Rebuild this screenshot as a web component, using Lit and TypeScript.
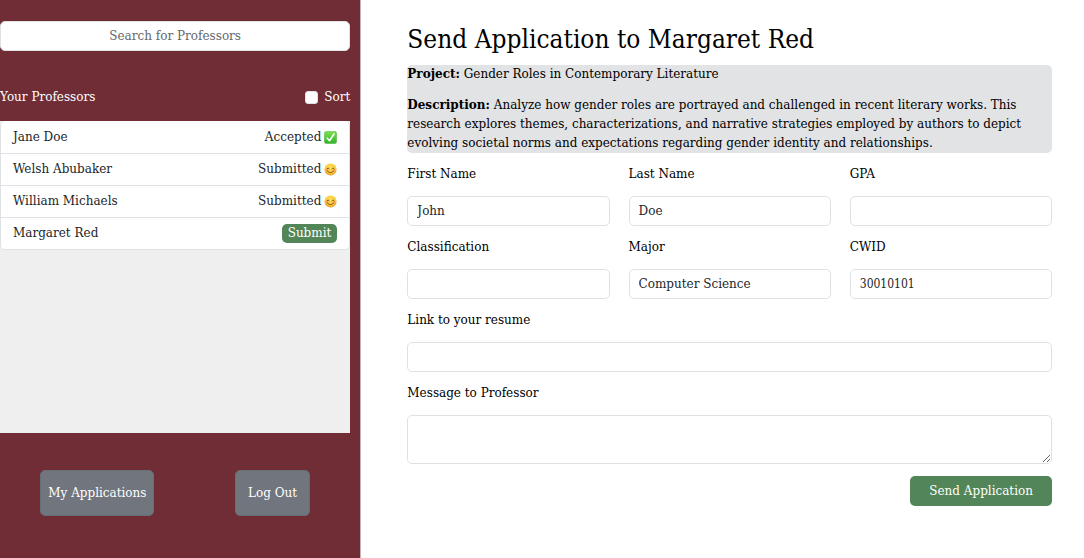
import { LitElement, html, css } from "lit";
import { customElement, property, state } from "lit/decorators.js";

type Status = "accepted" | "submitted" | "open";

interface Professor {
  name: string;
  status: Status;
}

const professors: Professor[] = [
  { name: "Jane Doe", status: "accepted" },
  { name: "Welsh Abubaker", status: "submitted" },
  { name: "William Michaels", status: "submitted" },
  { name: "Margaret Red", status: "open" },
];

const checkIcon = html`<svg viewBox="0 0 28 28" aria-hidden="true">
  <defs>
    <linearGradient id="green" x1="0" y1="0" x2="0" y2="1">
      <stop offset="0" stop-color="#7be04a" />
      <stop offset="1" stop-color="#2fb52b" />
    </linearGradient>
  </defs>
  <rect x="1" y="1" width="26" height="26" rx="4" fill="url(#green)" stroke="#3fa535" />
  <path d="M7 15.5 L12 21 L21.5 6.5" fill="none" stroke="#fff" stroke-width="3.4" stroke-linecap="round" stroke-linejoin="round" />
</svg>`;

const smileIcon = html`<svg viewBox="0 0 28 28" aria-hidden="true">
  <defs>
    <radialGradient id="gold" cx="0.5" cy="0.4" r="0.6">
      <stop offset="0" stop-color="#ffe566" />
      <stop offset="0.7" stop-color="#fbc93a" />
      <stop offset="1" stop-color="#dd9222" />
    </radialGradient>
  </defs>
  <circle cx="14" cy="14" r="13" fill="url(#gold)" />
  <circle cx="6.5" cy="16" r="3" fill="#f3893a" opacity="0.6" />
  <circle cx="21.5" cy="16" r="3" fill="#f3893a" opacity="0.6" />
  <path d="M6 12.5 Q8.8 8 11.5 12.5 M16.5 12.5 Q19.2 8 22 12.5 M7.5 17.5 Q14 24 20.5 17.5" fill="none" stroke="#6d3c12" stroke-width="1.8" stroke-linecap="round" />
</svg>`;

@customElement("professor-sidebar")
export class ProfessorSidebar extends LitElement {
  static styles = css`
    :host {
      display: flex;
      flex-direction: column;
      box-sizing: border-box;
      padding: 21px 10px 42px 0;
      background: #702d36;
      border-right: 1px solid #c9b0b3;
      color: #fff;
    }
    .search {
      box-sizing: border-box;
      width: 100%;
      height: 30px;
      padding: 0 10px;
      border: 1px solid #dee2e6;
      border-radius: 5px;
      background: #fff;
      color: #212529;
      font: inherit;
      text-align: center;
    }
    .search::placeholder {
      color: #63676b;
      opacity: 1;
    }
    .bar {
      display: flex;
      justify-content: space-between;
      align-items: center;
      margin: 37px 0 14px;
    }
    .title {
      margin: 0;
      font: inherit;
    }
    .sort {
      display: flex;
      align-items: center;
      gap: 6px;
    }
    .tick {
      appearance: none;
      width: 13px;
      height: 13px;
      margin: 0;
      border: 1px solid #dee2e6;
      border-radius: 3px;
      background: #fff;
    }
    .tick:checked {
      background: #0d6efd;
      border-color: #0d6efd;
    }
    .panel {
      flex: 1;
      background: #efefef;
    }
    .list {
      margin: 0;
      padding: 0;
      list-style: none;
      background: #fff;
      border: 1px solid #dee2e6;
      border-top: 0;
      border-radius: 5px;
      color: #212529;
    }
    .item {
      display: flex;
      justify-content: space-between;
      align-items: center;
      box-sizing: border-box;
      height: 32px;
      padding: 0 12px;
    }
    .item + .item {
      border-top: 1px solid #dee2e6;
    }
    .status {
      display: flex;
      align-items: center;
      gap: 3px;
    }
    .status svg {
      width: 13px;
      height: 13px;
    }
    .submit {
      padding: 0 6px;
      border: 0;
      border-radius: 5px;
      background: #528557;
      color: #fff;
      font: inherit;
    }
    .actions {
      display: flex;
      justify-content: space-around;
      margin-top: 37px;
    }
    .action {
      height: 46px;
      padding: 0 7px;
      border: 1px solid #676e76;
      border-radius: 5px;
      background: #71757d;
      color: #fff;
      font: inherit;
    }
    .wide {
      padding: 0 12px;
    }
  `;

  @state() private sorted = false;

  private renderStatus(status: Status) {
    if (status === "open") {
      return html`<button class="submit" type="button">Submit</button>`;
    }
    return status === "accepted"
      ? html`<span class="status">Accepted ${checkIcon}</span>`
      : html`<span class="status">Submitted ${smileIcon}</span>`;
  }

  render() {
    const rows = this.sorted
      ? [...professors].sort((a, b) => a.name.localeCompare(b.name))
      : professors;
    return html`
      <input class="search" type="text" placeholder="Search for Professors" aria-label="Search for Professors" />
      <div class="bar">
        <h2 class="title">Your Professors</h2>
        <label class="sort">
          <input
            class="tick"
            type="checkbox"
            .checked=${this.sorted}
            @change=${(e: Event) => (this.sorted = (e.target as HTMLInputElement).checked)}
          />Sort
        </label>
      </div>
      <div class="panel">
        <ul class="list">
          ${rows.map((p) => html`<li class="item"><span>${p.name}</span>${this.renderStatus(p.status)}</li>`)}
        </ul>
      </div>
      <div class="actions">
        <button class="action" type="button">My Applications</button>
        <button class="action wide" type="button">Log Out</button>
      </div>
    `;
  }
}

@customElement("application-form")
export class ApplicationForm extends LitElement {
  static styles = css`
    :host {
      display: block;
      box-sizing: border-box;
      padding: 24px 32px 24px 46px;
      color: #000;
    }
    .heading {
      margin: 0 0 10px;
      font-family: "DejaVu Serif Condensed", "DejaVu Serif", serif;
      font-size: 26px;
      font-weight: 400;
      line-height: 31px;
    }
    .project {
      border-radius: 5px;
      background: #e2e3e5;
    }
    .line {
      margin: 0;
    }
    .line + .line {
      margin-top: 12px;
    }
    .form {
      display: grid;
      grid-template-columns: repeat(3, minmax(0, 1fr));
      gap: 12px 19px;
      margin-top: 12px;
    }
    .field {
      display: flex;
      flex-direction: column;
      gap: 12px;
    }
    .full {
      grid-column: 1 / -1;
    }
    .label {
      line-height: 19px;
    }
    .control {
      box-sizing: border-box;
      width: 100%;
      height: 30px;
      padding: 0 9px;
      border: 1px solid #dee2e6;
      border-radius: 5px;
      background: #fff;
      color: #212529;
      font: inherit;
    }
    .area {
      display: block;
      height: 49px;
      padding: 5px 9px;
      resize: vertical;
    }
    .digits {
      font-family: "DejaVu Serif Condensed", "DejaVu Serif", serif;
    }
    .send {
      justify-self: end;
      height: 30px;
      padding: 0 19px;
      border: 0;
      border-radius: 5px;
      background: #528557;
      color: #fff;
      font: inherit;
    }
  `;

  @property() professor = "";

  private field(id: string, label: string, value = "", extra = "") {
    return html`<div class="field">
      <label class="label" for=${id}>${label}</label>
      <input class="control ${extra}" id=${id} type="text" .value=${value} />
    </div>`;
  }

  render() {
    return html`
      <h1 class="heading">Send Application to ${this.professor}</h1>
      <section class="project">
        <p class="line"><b>Project:</b> Gender Roles in Contemporary Literature</p>
        <p class="line">
          <b>Description:</b> Analyze how gender roles are portrayed and challenged in recent literary works. This
          research explores themes, characterizations, and narrative strategies employed by authors to depict
          evolving societal norms and expectations regarding gender identity and relationships.
        </p>
      </section>
      <form class="form" @submit=${(e: Event) => e.preventDefault()}>
        ${this.field("first", "First Name", "John")} ${this.field("last", "Last Name", "Doe")}
        ${this.field("gpa", "GPA")} ${this.field("classification", "Classification")}
        ${this.field("major", "Major", "Computer Science")} ${this.field("cwid", "CWID", "30010101", "digits")}
        <div class="field full">
          <label class="label" for="resume">Link to your resume</label>
          <input class="control" id="resume" type="url" />
        </div>
        <div class="field full">
          <label class="label" for="message">Message to Professor</label>
          <textarea class="control area" id="message"></textarea>
        </div>
        <button class="send full" type="submit">Send Application</button>
      </form>
    `;
  }
}

@customElement("app-root")
export class AppRoot extends LitElement {
  static styles = css`
    :host {
      display: grid;
      grid-template-columns: minmax(0, 1fr) minmax(0, 2fr);
      min-height: 100vh;
      background: #fff;
      font-family: "DejaVu Serif", serif;
      font-size: 12px;
      line-height: 19px;
    }
  `;

  render() {
    return html`
      <professor-sidebar></professor-sidebar>
      <application-form professor="Margaret Red"></application-form>
    `;
  }
}
